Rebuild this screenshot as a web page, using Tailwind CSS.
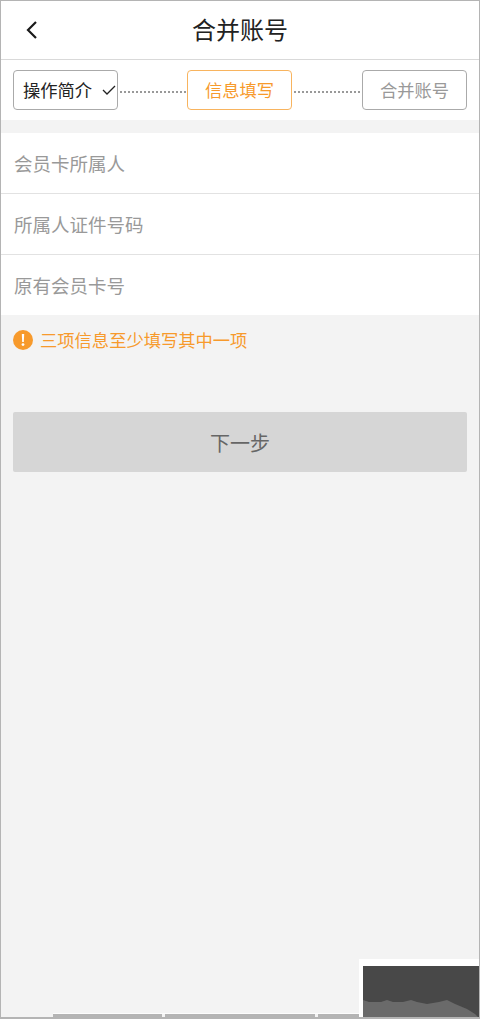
<!DOCTYPE html>
<html lang="zh">
<head>
    <meta charset="utf-8">
    <title>合并账号</title>
    <script src="https://cdn.jsdelivr.net/npm/@tailwindcss/browser@4"></script>
</head>
<body class="bg-[#f3f3f3] font-['Noto_Sans_CJK_SC','Noto_Sans',sans-serif]">
<div class="relative h-[1019px] w-[480px] overflow-hidden border border-[#b4b4b4] border-b-2">

    <!-- Header -->
    <header class="relative flex h-[59px] items-center justify-center border-b border-[#d9d9d9] bg-white pb-[2px]">
        <svg class="absolute left-[24px] top-[19px]" width="14" height="20" viewBox="0 0 14 20" fill="none" stroke="#1a1a1a" stroke-width="2.2">
            <path d="M11 2 L3 10 L11 18"/>
        </svg>
        <h1 class="text-[24px] leading-none text-[#222]">合并账号</h1>
    </header>

    <!-- Steps -->
    <div class="flex h-[60px] items-center bg-white px-[12px]">
        <div class="relative flex h-[40px] w-[105px] items-center rounded-[4px] border border-[#aaa] pl-[9px] text-[17.3px] text-[#222]">
            操作简介
            <svg class="absolute right-[1px] top-[13px]" width="14" height="11" viewBox="0 0 14 11" fill="none" stroke="#222" stroke-width="1.3">
                <path d="M1 6 L5 10 L13 2"/>
            </svg>
        </div>
        <div class="ml-[2px] mr-[1px] mt-[4px] h-[2px] w-[66px] bg-[repeating-linear-gradient(90deg,#999_0,#999_2px,transparent_2px,transparent_4px)]"></div>
        <div class="flex h-[40px] w-[105px] items-center justify-center rounded-[4px] border border-[#f8b45f] text-[17.3px] text-[#f79a2c]">信息填写</div>
        <div class="mx-[2px] mt-[4px] h-[2px] flex-1 bg-[repeating-linear-gradient(90deg,#999_0,#999_2px,transparent_2px,transparent_4px)]"></div>
        <div class="flex h-[40px] w-[105px] items-center justify-center rounded-[4px] border border-[#aaa] text-[17.3px] text-[#999]">合并账号</div>
    </div>

    <!-- Form fields -->
    <div class="mt-[13px] bg-white text-[18.5px] text-[#999]">
        <div class="flex h-[61px] items-center border-b border-[#e2e2e2] pl-[13px] pt-[2px]">会员卡所属人</div>
        <div class="flex h-[61px] items-center border-b border-[#e2e2e2] pl-[13px] pt-[2px]">所属人证件号码</div>
        <div class="flex h-[60px] items-center pl-[13px] pt-[2px]">原有会员卡号</div>
    </div>

    <!-- Hint -->
    <div class="mt-[14px] flex items-center gap-[7px] pl-[12px] text-[17.3px] leading-[22px] text-[#f79a2c]">
        <svg width="20" height="20" viewBox="0 0 20 20">
            <circle cx="10" cy="10" r="10" fill="#f79a2c"/>
            <path d="M8.8 4 H11.2 L10.8 12 H9.2 Z" fill="#fff"/>
            <circle cx="10" cy="14.6" r="1.4" fill="#fff"/>
        </svg>
        三项信息至少填写其中一项
    </div>

    <!-- Next button -->
    <div class="mx-[12px] mt-[61px] flex h-[60px] items-center justify-center rounded-[2px] bg-[#d6d6d6] pt-[2px] text-[20px] text-[#666]">下一步</div>

    <!-- Bottom scrollbar pieces -->
    <div class="absolute bottom-0 left-[52px] flex h-[4px] gap-[3px] border-t border-white/70">
        <div class="w-[109px] bg-[#b4b4b4]"></div>
        <div class="w-[150px] bg-[#b4b4b4]"></div>
        <div class="w-[50px] bg-[#b4b4b4]"></div>
    </div>

    <!-- Thumbnail corner -->
    <div class="absolute bottom-[-2px] right-[-1px] h-[60px] w-[121px] border-l-4 border-t-[7px] border-white bg-[#484848]">
        <svg class="absolute bottom-0 left-0" width="117" height="19" viewBox="0 0 117 19">
            <path d="M0 0 L6 2 L18 2 L24 0 L30 2 L40 2 L48 0 L54 2 L64 4 L76 2 L84 0 L92 4 L104 9 L112 14 L117 19 L0 19 Z" fill="#6a6a6a"/>
        </svg>
    </div>
</div>
</body>
</html>
